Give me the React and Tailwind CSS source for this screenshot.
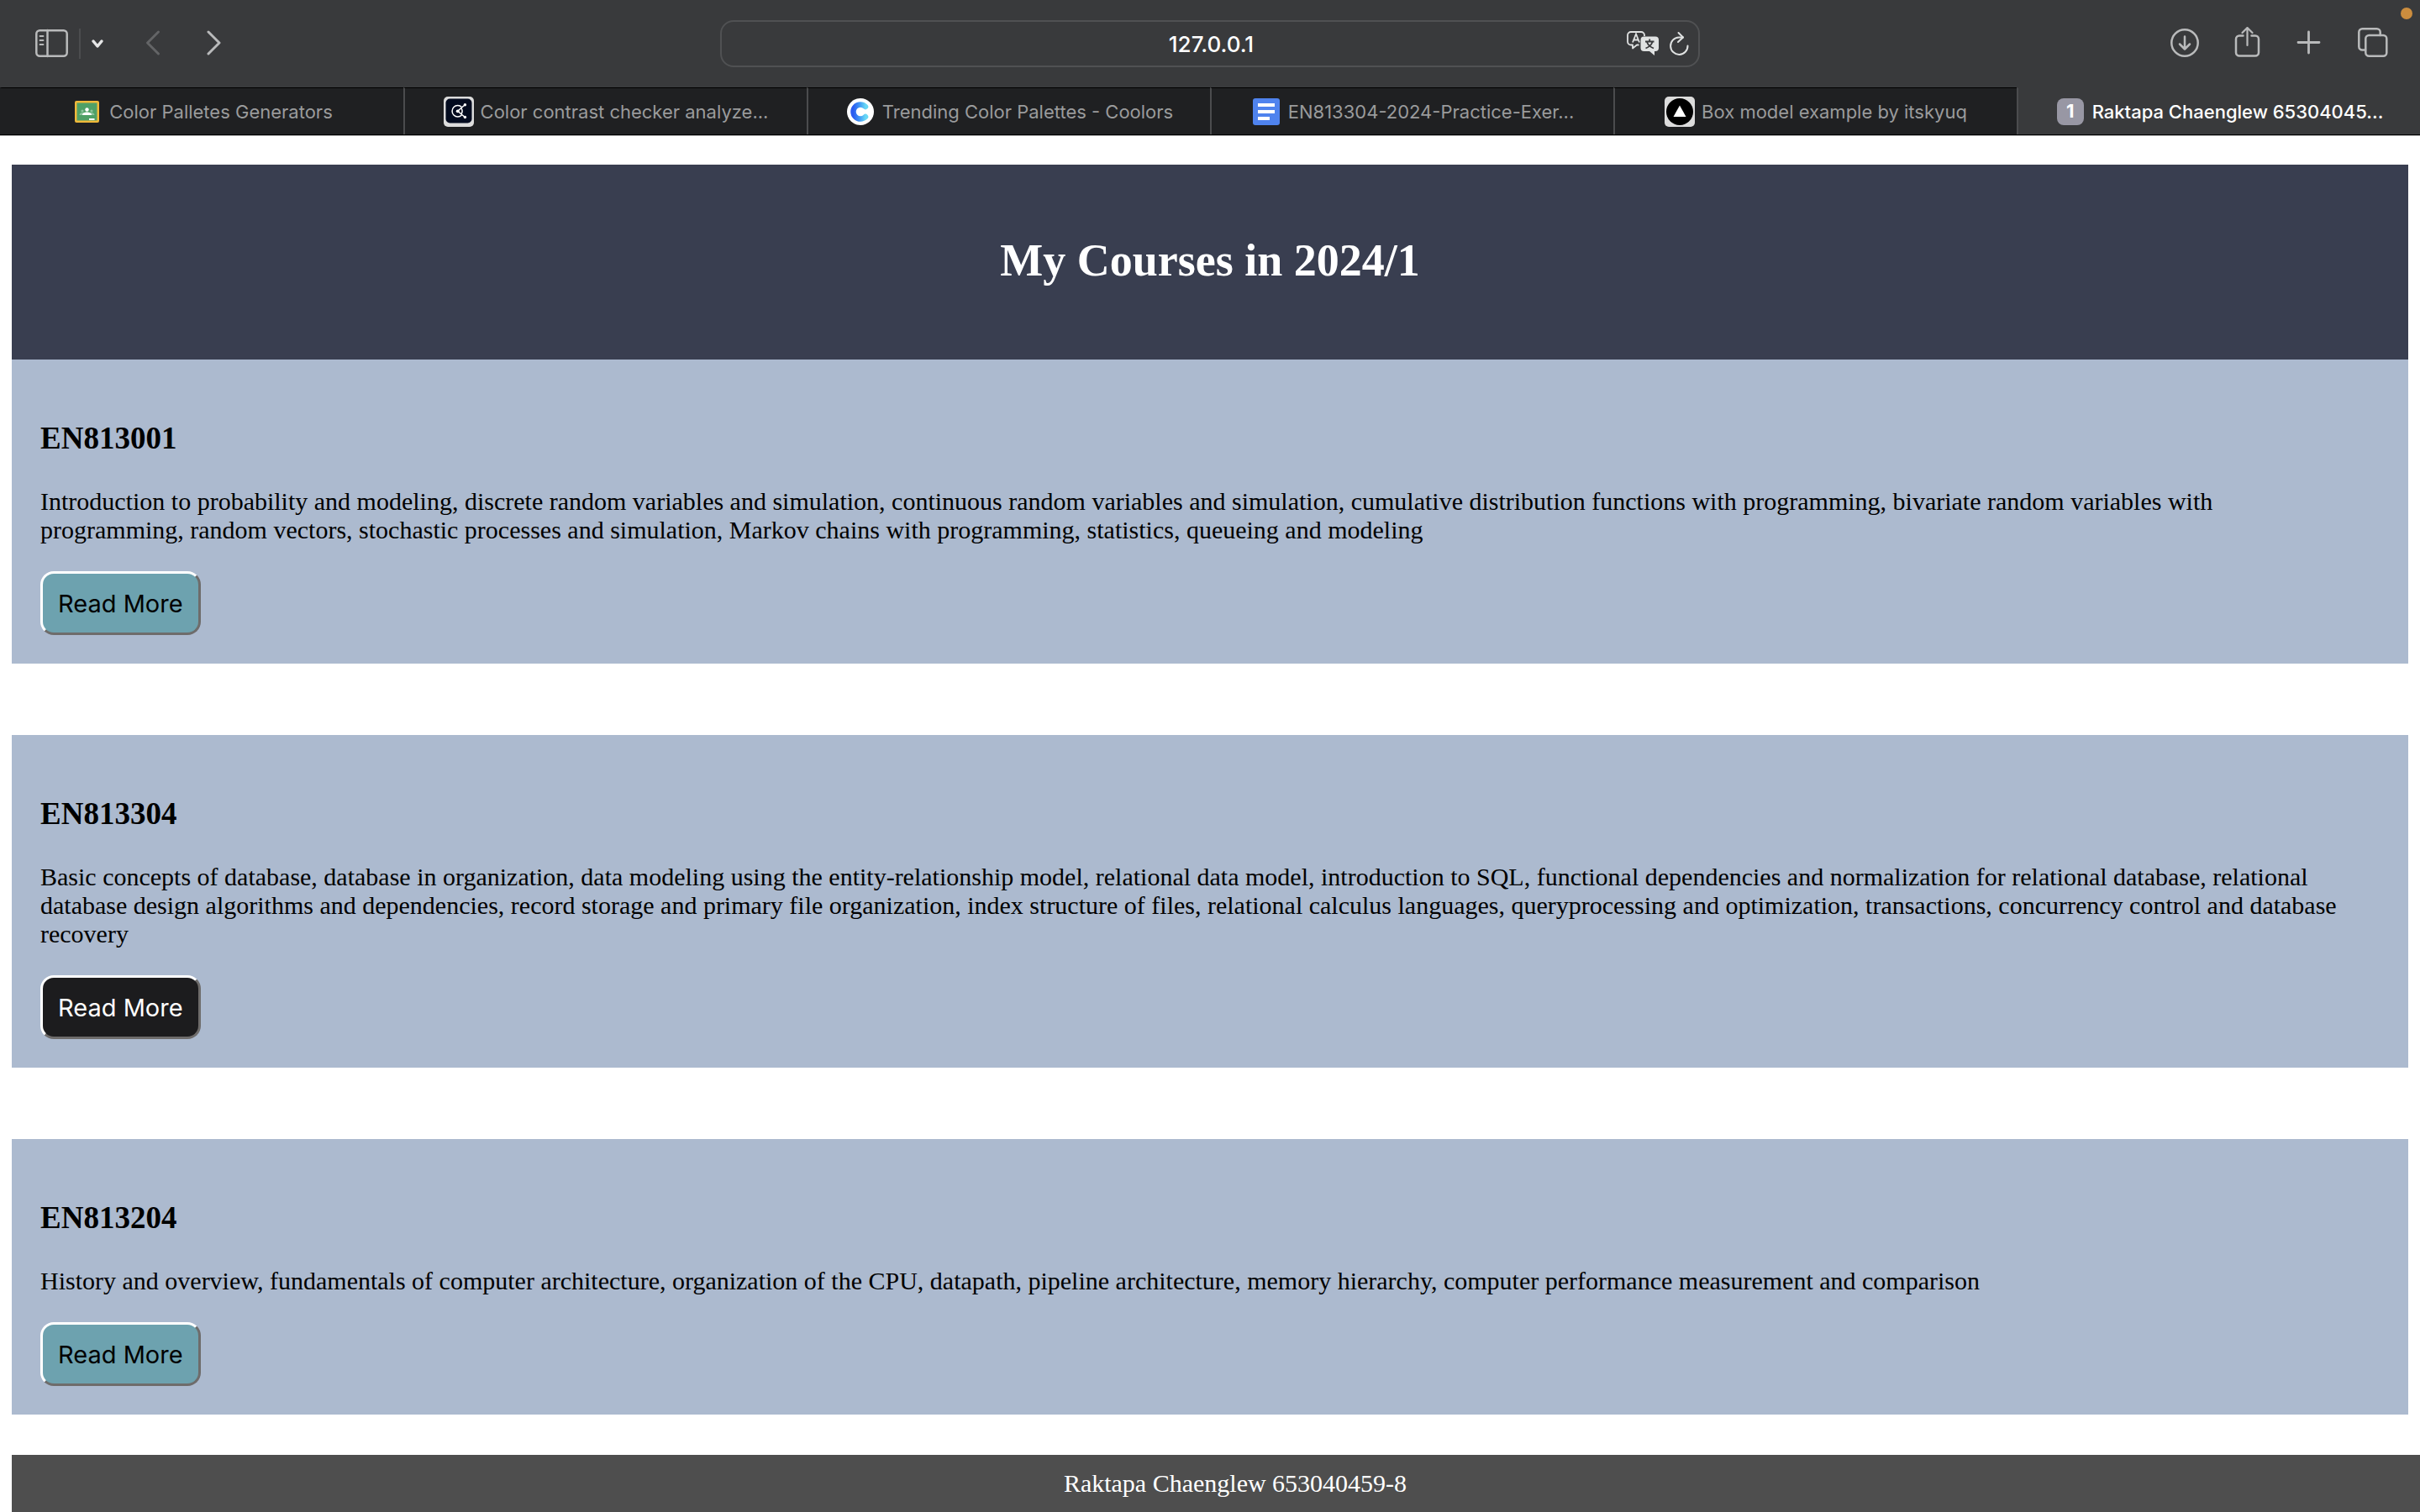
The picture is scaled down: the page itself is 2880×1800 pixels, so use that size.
const tabs = [
  { id: 'classroom', title: 'Color Palletes Generators', icon: ClassroomIcon },
  { id: 'contrast', title: 'Color contrast checker analyze...', icon: ContrastIcon },
  { id: 'coolors', title: 'Trending Color Palettes - Coolors', icon: CoolorsIcon },
  { id: 'docs', title: 'EN813304-2024-Practice-Exer...', icon: DocsIcon },
  { id: 'box', title: 'Box model example by itskyuq', icon: TriangleIcon },
  { id: 'courses', title: 'Raktapa Chaenglew 65304045...', icon: NumberIcon, active: true },
];

const courses = [
  {
    code: 'EN813001',
    text: 'Introduction to probability and modeling, discrete random variables and simulation, continuous random variables and simulation, cumulative distribution functions with programming, bivariate random variables with programming, random vectors, stochastic processes and simulation, Markov chains with programming, statistics, queueing and modeling',
  },
  {
    code: 'EN813304',
    text: 'Basic concepts of database, database in organization, data modeling using the entity-relationship model, relational data model, introduction to SQL, functional dependencies and normalization for relational database, relational database design algorithms and dependencies, record storage and primary file organization, index structure of files, relational calculus languages, queryprocessing and optimization, transactions, concurrency control and database recovery',
    dark: true,
  },
  {
    code: 'EN813204',
    text: 'History and overview, fundamentals of computer architecture, organization of the CPU, datapath, pipeline architecture, memory hierarchy, computer performance measurement and comparison',
  },
];

function ClassroomIcon() {
  return (
    <svg viewBox="0 0 36 36" className="size-9 shrink-0">
      <rect x="3" y="5" width="29" height="26" rx="2" fill="#f0b93a" />
      <rect x="5.500" y="7.500" width="24" height="21" fill="#4fa066" />
      <circle cx="12" cy="17" r="1.600" fill="#8cc49b" />
      <circle cx="23" cy="17" r="1.600" fill="#8cc49b" />
      <path d="M8.500 22c0-2 1.500-3 3.500-3s3 1 3 3zM20 22c0-2 1.500-3 3-3s3.500 1 3.500 3z" fill="#8cc49b" />
      <circle cx="17.500" cy="15.500" r="2.200" fill="#fff" />
      <path d="M12 22c0-2.600 2.800-3.600 5.500-3.600s5.500 1 5.500 3.600z" fill="#fff" />
      <rect x="20" y="26" width="6.500" height="2" fill="#fff" />
    </svg>
  );
}

function ContrastIcon() {
  return (
    <svg viewBox="0 0 36 36" className="size-9 shrink-0">
      <rect width="36" height="36" rx="5" fill="#dcdcdc" />
      <rect x="2.500" y="2.500" width="31" height="29" rx="5" fill="#030b1f" />
      <g fill="none" stroke="#fff" strokeWidth="1.500">
        <path d="M21.500 12.500a6.700 6.700 0 1 0 0 9.500" />
        <path d="M16.700 17.300 25 10M16.700 17.300l8.300 7M20.500 13.500c2.200 2 2.200 5.600 0 7.500" />
      </g>
      <circle cx="16.700" cy="17.300" r="1.900" fill="#fff" />
      <circle cx="25.400" cy="9.700" r="1.700" fill="#fff" />
      <circle cx="25.400" cy="24.500" r="1.700" fill="#fff" />
    </svg>
  );
}

function CoolorsIcon() {
  return (
    <svg viewBox="0 0 36 36" className="size-9 shrink-0">
      <defs>
        <linearGradient id="coolors" x1="0" x2="1">
          <stop offset="0" stopColor="#2b5cf0" />
          <stop offset="0.500" stopColor="#3f96f5" />
          <stop offset="1" stopColor="#68d8f5" />
        </linearGradient>
      </defs>
      <circle cx="18" cy="18" r="16" fill="#fff" />
      <path d="M24 12a8.500 8.500 0 1 0 0 12" fill="none" stroke="url(#coolors)" strokeWidth="6.500" strokeLinecap="round" />
    </svg>
  );
}

function DocsIcon() {
  return (
    <svg viewBox="0 0 36 36" className="size-9 shrink-0">
      <rect x="2" y="2" width="32" height="32" rx="3" fill="#4f83ee" />
      <path d="M8 8h20v4H8zM8 16h20v4H8zM8 24h14v4H8z" fill="#fff" />
    </svg>
  );
}

function TriangleIcon() {
  return (
    <svg viewBox="0 0 36 36" className="size-9 shrink-0">
      <rect width="36" height="36" rx="5" fill="#dcdcdc" />
      <circle cx="18" cy="18" r="16" fill="#000" />
      <path d="M18 10.500 25.500 24h-15z" fill="#fff" />
    </svg>
  );
}

function NumberIcon() {
  return (
    <span className="flex size-9 shrink-0 items-center justify-center">
      <span className="flex size-8 items-center justify-center rounded-lg bg-[#9897a4] text-[22px] font-bold text-white">1</span>
    </span>
  );
}

function Stroke({ className, children, width = 36, height = 40, sw = 2.5 }) {
  return (
    <svg width={width} height={height} viewBox={`0 0 ${width} ${height}`} fill="none" stroke="currentColor" strokeWidth={sw} strokeLinecap="round" strokeLinejoin="round" className={className}>
      {children}
    </svg>
  );
}

function Toolbar() {
  return (
    <div className="grid h-[104px] grid-cols-[1fr_minmax(0,1166px)_1fr] items-center bg-[#393a3c] text-[#b9babb]">
      <div className="flex items-center pl-[42px]">
        <button type="button" aria-label="Show sidebar">
          <Stroke width={39} height={40}>
            <rect x="1.300" y="4.300" width="36.400" height="30.400" rx="4" />
            <path d="M14.500 4v31" />
            <path d="M5.500 11h4M5.500 16h4M5.500 21h4" strokeWidth="1.800" />
          </Stroke>
        </button>
        <span className="ml-[13px] h-9 w-0.5 bg-[#4c4d4f]" />
        <button type="button" aria-label="Tab groups" className="ml-2.5 text-[#e6e6e7]">
          <Stroke width={20} height={40} sw={3.5}>
            <path d="m5 17 5 6 5-6" />
          </Stroke>
        </button>
        <button type="button" aria-label="Back" className="ml-[46px] text-[#636466]">
          <Stroke width={20} height={40} sw={3}>
            <path d="M16.500 6 3.500 19l13 13" />
          </Stroke>
        </button>
        <button type="button" aria-label="Forward" className="ml-[52px]">
          <Stroke width={20} height={40} sw={3}>
            <path d="m4 6 13 13L4 32" />
          </Stroke>
        </button>
      </div>

      <div className="flex h-14 items-center rounded-2xl border-2 border-[#505153] pl-[88px] pr-[11px]">
        <input aria-label="Address" defaultValue="127.0.0.1" className="min-w-0 flex-1 bg-transparent text-center text-[26px] font-medium text-white outline-none" />
        <button type="button" aria-label="Translate" className="text-[#e0e2e2]">
          <svg width="38" height="32" viewBox="0 0 38 32" fill="none">
            <path d="M14.500 17.500H12l-5 4v-4H5a4 4 0 0 1-4-4V6a4 4 0 0 1 4-4h12a4 4 0 0 1 4 4v1" stroke="currentColor" strokeWidth="1.800" strokeLinejoin="round" />
            <path d="m7 14.500 4-10 4 10M8.300 11.500h5.400" stroke="currentColor" strokeWidth="1.800" />
            <path d="M20.500 7.500h13.500a4 4 0 0 1 4 4V21a4 4 0 0 1-4 4h-1v5l-6-5h-6.500a4 4 0 0 1-4-4v-9.500a4 4 0 0 1 4-4z" fill="currentColor" />
            <path d="M22 13.500h10.500M27.200 10.500v3M24 14c1.200 3.500 4 6 8 7.500M30.500 14c-1.200 3.500-4 6-8 7.500" stroke="#393a3c" strokeWidth="1.800" />
          </svg>
        </button>
        <button type="button" aria-label="Reload" className="ml-3 text-[#e0e2e2]">
          <Stroke width={24} height={32} sw={2}>
            <path d="M17 8.500H12A10.200 10.200 0 1 0 22.500 18.500" />
            <path d="m11.500 3 5.500 5.500-6 5.500" />
          </Stroke>
        </button>
      </div>

      <div className="relative flex items-center justify-end pr-[38px]">
        <button type="button" aria-label="Downloads">
          <Stroke width={36} height={40}>
            <circle cx="18" cy="19" r="15.700" />
            <path d="M18 11.500V26M12 20.500l6 6 6-6" />
          </Stroke>
        </button>
        <button type="button" aria-label="Share" className="ml-10">
          <Stroke width={36} height={40}>
            <path d="M11.500 10.500H7A4 4 0 0 0 3 14.500v16a4 4 0 0 0 4 4h19a4 4 0 0 0 4-4v-16a4 4 0 0 0-4-4H21.500" />
            <path d="M16.500 22V1.500M10.500 7l6-6 6 6" strokeWidth="2.200" />
          </Stroke>
        </button>
        <button type="button" aria-label="New tab" className="ml-9">
          <Stroke width={36} height={40} sw={2.800}>
            <path d="M17.500 6v25M5 18.500h25" />
          </Stroke>
        </button>
        <button type="button" aria-label="Tab overview" className="ml-10">
          <Stroke width={36} height={40}>
            <rect x="9.300" y="10" width="25" height="24.700" rx="4" />
            <path d="M9 27.500H5.300a4 4 0 0 1-4-4V6.300a4 4 0 0 1 4-4h17.400a4 4 0 0 1 4 4v3.700" />
          </Stroke>
        </button>
        <span className="absolute -top-[23px] right-[9px] size-[14px] rounded-full bg-[#cc8d3e]" />
      </div>
    </div>
  );
}

function TabBar() {
  return (
    <nav className="grid h-[57px] grid-cols-6 border-b border-black">
      {tabs.map(({ id, title, icon: Icon, active }) => (
        <button
          key={id}
          type="button"
          className={
            active
              ? 'flex min-w-0 items-center justify-center gap-2 border-l-2 border-t border-l-[#4b4c4e] border-t-[#393a3c] bg-[#393a3c] text-[22px] font-medium text-white'
              : 'flex min-w-0 items-center justify-center gap-2 border-l-2 border-t border-l-[#4b4c4e] border-t-black bg-[#1f2022] text-[22px] text-[#9a9b9c] first:border-l-[#1f2022]'
          }
        >
          <Icon />
          <span className="truncate pt-0.5">{title}</span>
        </button>
      ))}
    </nav>
  );
}

function Course({ code, text, dark }) {
  return (
    <section className="bg-[#acbacf] px-[34px] pt-[73px] pb-[34px]">
      <h2 className="text-[37px] leading-[42px] font-bold">{code}</h2>
      <p className="mt-[37px] pr-7 text-[30px] leading-[34px]">{text}</p>
      <button
        type="button"
        className={
          dark
            ? 'mt-8 block rounded-2xl border-3 border-t-white border-l-white border-r-[#6e6c6b] border-b-[#6e6c6b] bg-[#1c1c1e] px-[18px] pt-[18px] pb-4 font-[Inter,sans-serif] text-[29px] leading-9 text-white'
            : 'mt-8 block rounded-2xl border-3 border-t-white border-l-white border-r-[#6e6c6b] border-b-[#6e6c6b] bg-[#6da2af] px-[18px] pt-[18px] pb-4 font-[Inter,sans-serif] text-[29px] leading-9 text-black'
        }
      >
        Read More
      </button>
    </section>
  );
}

export default function App() {
  return (
    <div className="min-h-screen bg-white">
      <header className="font-[Inter,sans-serif]">
        <Toolbar />
        <TabBar />
      </header>
      <div className="border-t border-[#b5b5b5] font-['Liberation_Serif',serif] text-black">
        <main className="px-[14px] pt-[34px]">
          <h1 className="bg-[#393e50] pt-[82px] pb-[86px] text-center text-[54px] leading-[64px] font-bold text-white">My Courses in 2024/1</h1>
          <div className="flex flex-col gap-[85px]">
            {courses.map((course) => (
              <Course key={course.code} {...course} />
            ))}
          </div>
        </main>
        <footer className="mt-12 ml-[14px] bg-[#4e4e4e] py-[17px] pl-[46px] text-center text-[30px] leading-[34px] text-white">Raktapa Chaenglew 653040459-8</footer>
      </div>
    </div>
  );
}
